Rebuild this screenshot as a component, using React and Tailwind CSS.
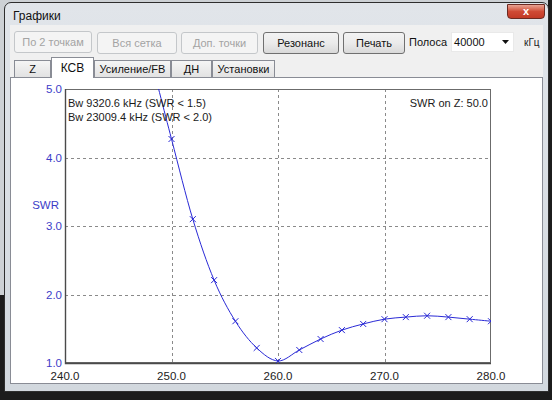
import React from 'react';

const FONT = { fontFamily: '"Liberation Sans", Arial, sans-serif' };

const X = (f) => 65 + ((f - 240) * 426) / 40;
const Y = (v) => 361 - (v - 1) * 68.5;

const swr = [
    [248, 5.48], [250, 4.27], [252, 3.1], [254, 2.21], [256, 1.61], [258, 1.22],
    [260, 1.03], [262, 1.19], [264, 1.35], [266, 1.48], [268, 1.57], [270, 1.64],
    [272, 1.67], [274, 1.69], [276, 1.67], [278, 1.64], [280, 1.61],
];

const pts = swr.map(([f, v]) => [X(f), Y(v)]);

// catmull-rom through the samples
const curvePath = () => {
    let d = `M${pts[0][0]},${pts[0][1]}`;
    for (let i = 0; i < pts.length - 1; i++) {
        const p0 = pts[i - 1] || pts[i];
        const p1 = pts[i];
        const p2 = pts[i + 1];
        const p3 = pts[i + 2] || p2;
        const c1 = [p1[0] + (p2[0] - p0[0]) / 6, p1[1] + (p2[1] - p0[1]) / 6];
        const c2 = [p2[0] - (p3[0] - p1[0]) / 6, p2[1] - (p3[1] - p1[1]) / 6];
        d += ` C${c1[0]},${c1[1]} ${c2[0]},${c2[1]} ${p2[0]},${p2[1]}`;
    }
    return d;
};

const ToolButton = ({ label, width, disabled }) => (
    <button
        className={
            disabled
                ? 'h-[22px] rounded-[3px] border border-[#c4c7ca] bg-[#f4f4f4] text-[11px] text-[#a3a3a3]'
                : 'h-[22px] rounded-[3px] border border-[#707070] bg-gradient-to-b from-[#f3f3f3] via-[#ebebeb] to-[#d9d9d9] text-[11px] text-[#111]'
        }
        style={{ width }}
    >
        {label}
    </button>
);

const Tab = ({ label, width, active }) => (
    <div
        className={
            active
                ? 'relative z-10 -mb-px flex h-[21px] items-center justify-center border border-b-0 border-[#898c95] bg-white text-[12px] text-[#111]'
                : 'flex h-[17px] items-center justify-center border border-b-0 border-[#898c95] bg-gradient-to-b from-[#f5f5f5] to-[#e2e2e2] text-[11px] text-[#111]'
        }
        style={{ width }}
    >
        {label}
    </div>
);

const SwrChart = () => {
    const yTicks = [1, 2, 3, 4, 5];
    const xTicks = [240, 250, 260, 270, 280];
    return (
        <svg width="531" height="307" viewBox="11 76 531 307" className="block" style={FONT}>
            <defs>
                <clipPath id="plot">
                    <rect x="65" y="87" width="426" height="274" />
                </clipPath>
            </defs>

            {[2, 3, 4].map((v) => (
                <line key={v} x1="65" x2="491" y1={Math.round(Y(v)) + 0.5} y2={Math.round(Y(v)) + 0.5}
                    stroke="#8a8a8a" strokeDasharray="3 3" />
            ))}
            {[250, 260, 270].map((f) => (
                <line key={f} x1={Math.round(X(f)) + 0.5} x2={Math.round(X(f)) + 0.5} y1="87" y2="361"
                    stroke="#8a8a8a" strokeDasharray="3 3" />
            ))}

            <rect x="65.5" y="87.5" width="425" height="273" fill="none" stroke="#6b6b6b" />
            <path d="M65.5 87 V361.5 H491" fill="none" stroke="#4a4a4a" strokeWidth="1.4" />

            <g clipPath="url(#plot)" stroke="#2a2ad6" fill="none" strokeWidth="1">
                <path d={curvePath()} />
                {pts.map(([x, y], i) => (
                    <path key={i} d={`M${x - 3},${y - 3} L${x + 3},${y + 3} M${x - 3},${y + 3} L${x + 3},${y - 3}`} />
                ))}
            </g>

            {yTicks.map((v) => (
                <text key={v} x="62" y={Y(v) + 4} textAnchor="end" fontSize="11.5" fill="#3c3cc8">
                    {v.toFixed(1)}
                </text>
            ))}
            <text x="59" y="207" textAnchor="end" fontSize="11.5" fill="#3c3cc8">SWR</text>

            {xTicks.map((f) => (
                <text key={f} x={X(f)} y="378" textAnchor="middle" fontSize="11.5" fill="#222">
                    {f.toFixed(1)}
                </text>
            ))}

            <text x="68" y="105" fontSize="11" fill="#1a1a1a">Bw 9320.6 kHz (SWR &lt; 1.5)</text>
            <text x="68" y="119" fontSize="11" fill="#1a1a1a">Bw 23009.4 kHz (SWR &lt; 2.0)</text>
            <text x="488" y="105" textAnchor="end" fontSize="11" fill="#1a1a1a">SWR on Z: 50.0</text>
        </svg>
    );
};

export default function App() {
    return (
        <div
            className="h-[400px] w-[552px] overflow-hidden bg-[linear-gradient(to_right,transparent_548px,#1c1c1c_548px),linear-gradient(to_bottom,#cdd1d5_295px,#1c1c1c_295px)] pt-[2px] pl-[4px]"
            style={FONT}
        >
            <div className="flex h-[390px] w-[545px] flex-col rounded-t-[7px] border border-[#2e2e2e] bg-gradient-to-b from-[#e1e5ea] to-[#d2d8de]">
                {/* title bar */}
                <div className="flex h-[22px] items-start justify-between pl-[8px] pr-[3px]">
                    <span className="pt-[6px] text-[12px] leading-[14px] text-[#111]">Графики</span>
                    <div className="mt-px flex h-[15px] w-[38px] items-center justify-center rounded-b-[4px] border border-[#6b2a22] bg-gradient-to-b from-[#e8a393] via-[#cf4a35] to-[#c23a26] text-[11px] font-bold leading-none text-white">
                        x
                    </div>
                </div>

                {/* client area */}
                <div className="mx-[5px] flex min-h-0 flex-1 flex-col bg-[#f0f0f0]">
                    <div className="flex items-center pt-[5px] pl-[4px]">
                        <ToolButton label="По 2 точкам" width={78} disabled />
                        <div className="ml-[5px]"><ToolButton label="Вся сетка" width={80} disabled /></div>
                        <div className="ml-[4px]"><ToolButton label="Доп. точки" width={77} disabled /></div>
                        <div className="ml-[5px]"><ToolButton label="Резонанс" width={76} /></div>
                        <div className="ml-[4px]"><ToolButton label="Печать" width={62} /></div>
                        <span className="ml-[4px] text-[11px] text-[#111]">Полоса</span>
                        <div className="ml-[4px] flex h-[20px] w-[63px] items-center justify-between border border-[#e9e9e9] bg-white pl-[2px] pr-[4px] text-[11px] text-[#111]">
                            <span>40000</span>
                            <svg width="7" height="4" viewBox="0 0 7 4"><path d="M0 0H7L3.5 4Z" fill="#111" /></svg>
                        </div>
                        <span className="ml-[10px] text-[10px] text-[#222]">кГц</span>
                    </div>

                    <div className="mt-[3px] flex h-[20px] items-end pl-[4px]">
                        <Tab label="Z" width={37} />
                        <Tab label="КСВ" width={43} active />
                        <Tab label="Усиление/FB" width={77} />
                        <Tab label="ДН" width={41} />
                        <Tab label="Установки" width={63} />
                    </div>

                    <div className="min-h-0 flex-1 border border-[#898c95] bg-white">
                        <SwrChart />
                    </div>
                </div>
                <div className="h-[7px]" />
            </div>
        </div>
    );
}
